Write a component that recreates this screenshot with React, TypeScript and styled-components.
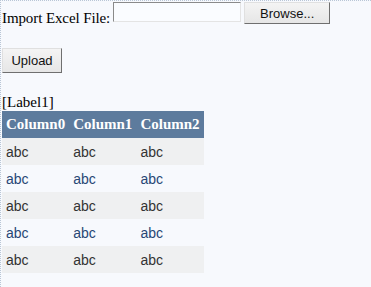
import React from "react";
import styled, { createGlobalStyle } from "styled-components";

const Global = createGlobalStyle`
  html, body { margin: 0; padding: 0; background: #f7f9fd; }
  body { font-family: "Liberation Serif", "Times New Roman", serif; font-size: 15px; color: #000; }
`;

const Surface = styled.div`
  width: 371px;
  height: 287px;
  box-sizing: border-box;
  border-top: 1px dotted #b9c6d6;
  border-left: 1px dotted #b9c6d6;
  padding: 1px 0 0 1px;
  display: flex;
  flex-direction: column;
  align-items: flex-start;
`;

const Row = styled.div`
  display: flex;
  align-items: flex-start;
  height: 22px;
`;

const Label = styled.span`
  line-height: 18px;
  margin-top: 7px;
  letter-spacing: -0.1px;
`;

const FileBox = styled.div`
  width: 126px;
  height: 18px;
  margin-left: 3px;
  background: #fafcff;
  border: 1px solid;
  border-color: #8a8a8a #e4e4e4 #e4e4e4 #8a8a8a;
`;

const Button = styled.button<{ $w: number }>`
  width: ${(p) => p.$w}px;
  height: 22px;
  box-sizing: border-box;
  padding: 0;
  font-family: "Liberation Sans", Arial, sans-serif;
  font-size: 13px;
  color: #111;
  background: linear-gradient(#f4f4f4, #e6e6e6);
  border: 1px solid;
  border-color: #e0e0e0 #6f6f6f #6f6f6f #e0e0e0;
  border-radius: 0;
`;

const BrowseButton = styled(Button)`
  margin-left: 3px;
`;

const UploadButton = styled(Button)`
  height: 25px;
  margin: 24px 0 0 0;
`;

const LabelText = styled.div`
  margin: 21px 0 0 0;
  line-height: 17px;
`;

const Grid = styled.table`
  border-collapse: collapse;
`;

const Head = styled.th`
  background: #5d7b9d;
  color: #fff;
  font-weight: bold;
  font-family: "Liberation Serif", "Times New Roman", serif;
  font-size: 15px;
  text-align: left;
  height: 27px;
  padding: 0 4px;
`;

const Cell = styled.td<{ $alt: boolean }>`
  background: ${(p) => (p.$alt ? "transparent" : "#eff0f1")};
  color: ${(p) => (p.$alt ? "#284775" : "#333333")};
  font-family: "Liberation Sans", Arial, sans-serif;
  font-size: 14px;
  height: 27px;
  padding: 0 4px;
`;

const cols = ["Column0", "Column1", "Column2"];

export default function App() {
  return (
    <>
      <Global />
      <Surface>
        <Row>
          <Label>Import Excel File:</Label>
          <FileBox />
          <BrowseButton $w={86}>Browse...</BrowseButton>
        </Row>
        <UploadButton $w={60}>Upload</UploadButton>
        <LabelText>[Label1]</LabelText>
        <Grid>
          <thead>
            <tr>
              {cols.map((c) => (
                <Head key={c}>{c}</Head>
              ))}
            </tr>
          </thead>
          <tbody>
            {[0, 1, 2, 3, 4].map((r) => (
              <tr key={r}>
                {cols.map((c) => (
                  <Cell key={c} $alt={r % 2 === 1}>abc</Cell>
                ))}
              </tr>
            ))}
          </tbody>
        </Grid>
      </Surface>
    </>
  );
}
